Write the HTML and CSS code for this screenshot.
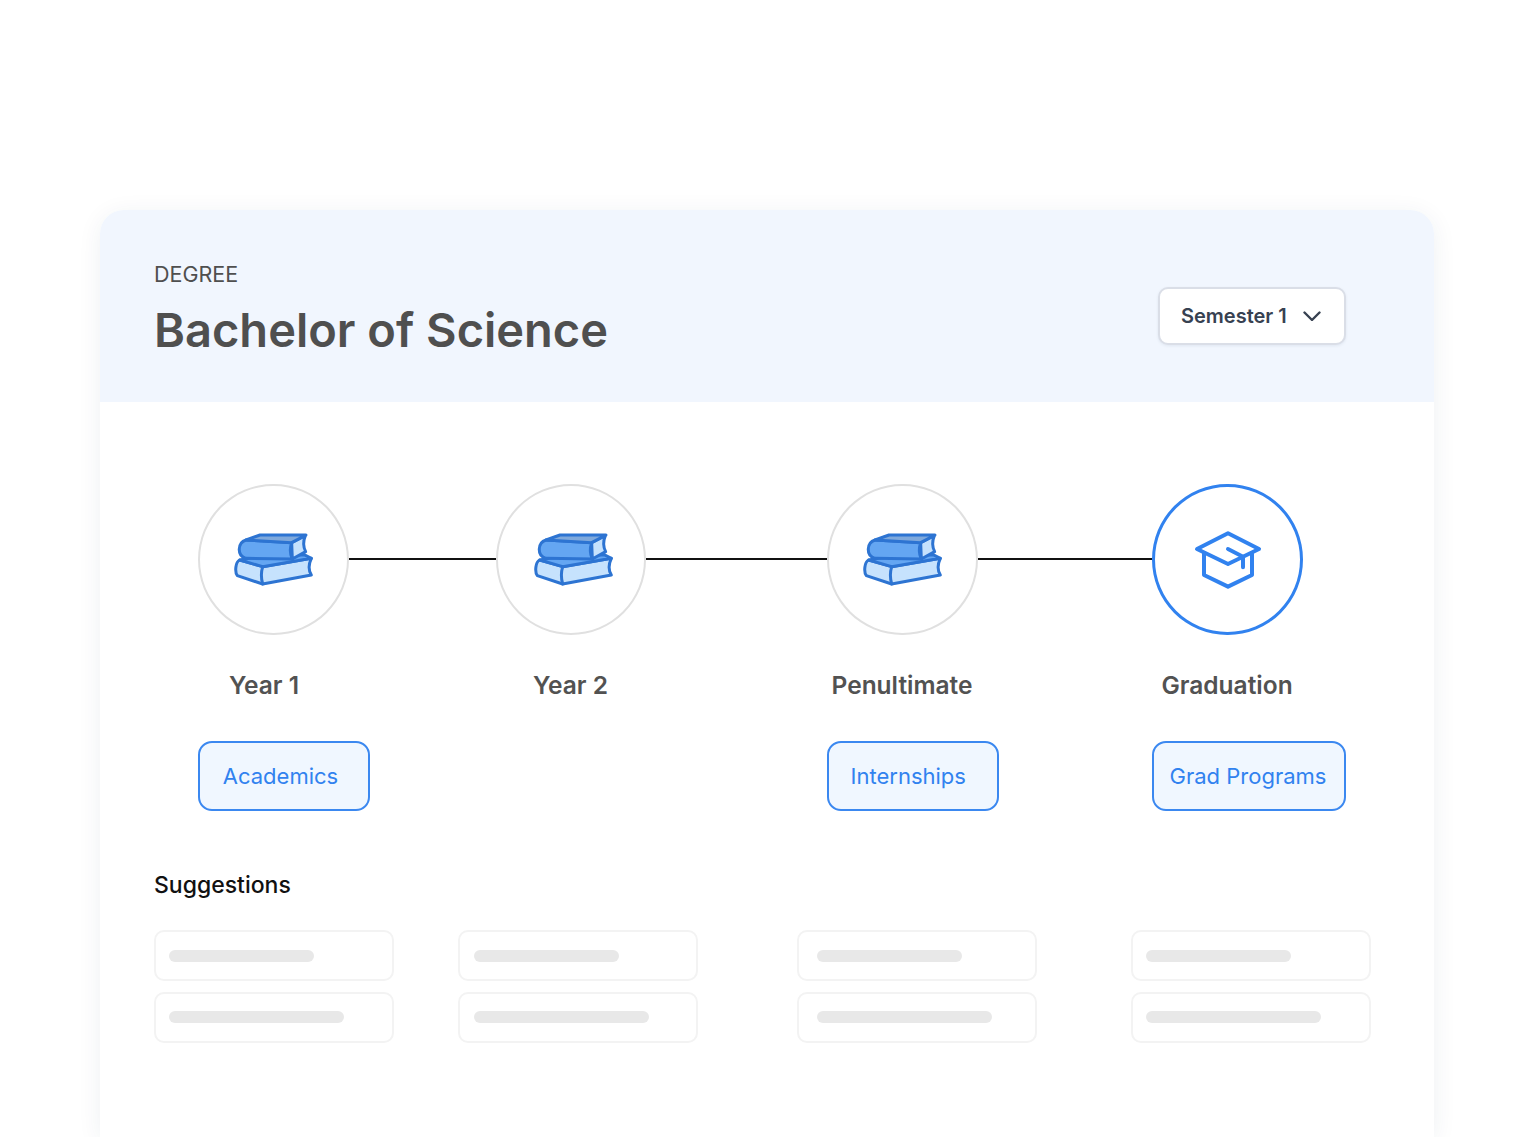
FILE: index.html
```html
<!DOCTYPE html>
<html lang="en">
<head>
    <meta charset="UTF-8">
    <meta name="viewport" content="width=device-width, initial-scale=1.0">
    <title>Degree Path</title>
    <link rel="stylesheet" href="styles.css">
</head>
<body>
    <svg class="defs" width="0" height="0" aria-hidden="true">
        <symbol id="books" viewBox="130 148 240 180">
            <g stroke="#2d74d2" stroke-width="9" stroke-linejoin="round" stroke-linecap="round">
                <path fill="#c6e2fd" d="M147 238 C134 244 132 274 140 285 L216 310 L362 283 C354 270 354 250 362 233 L216 258 Z"/>
                <path fill="#64a6f2" d="M147 238 L216 258 L362 233 L340 222 L180 232 Z"/>
                <path fill="none" d="M216 258 C211 275 211 293 216 310"/>
                <path fill="#c6e2fd" d="M303 186 L344 165 C338 180 337 198 345 213 L305 235 Z"/>
                <path fill="#64a6f2" d="M166 178 C140 186 138 226 166 233 L305 235 C298 220 298 200 303 186 Z"/>
                <path fill="#7fa9dc" d="M166 178 L208 163 L346 163 L303 186 Z"/>
            </g>
        </symbol>
    </svg>
    <main class="card">
        <header class="card-header">
            <div>
                <div class="eyebrow">DEGREE</div>
                <h1>Bachelor of Science</h1>
            </div>
            <button class="select">
                Semester 1
                <svg width="18" height="10" viewBox="0 0 18 10" fill="none" stroke="#374151" stroke-width="2.4" stroke-linecap="round" stroke-linejoin="round"><path d="M1.5 1.5 L9 9 L16.5 1.5"/></svg>
            </button>
        </header>

        <section class="timeline">
            <div class="step">
                <div class="track">
                    <div class="circle"><svg class="icon"><use href="#books"/></svg></div>
                    <div class="line"></div>
                </div>
                <div class="label label-short">Year 1</div>
                <a class="tag tag-md">Academics</a>
            </div>
            <div class="step">
                <div class="track">
                    <div class="circle"><svg class="icon icon-nudge"><use href="#books"/></svg></div>
                    <div class="line"></div>
                </div>
                <div class="label label-empty">Year 2</div>
            </div>
            <div class="step">
                <div class="track">
                    <div class="circle"><svg class="icon"><use href="#books"/></svg></div>
                    <div class="line"></div>
                </div>
                <div class="label">Penultimate</div>
                <a class="tag tag-sm">Internships</a>
            </div>
            <div class="step">
                <div class="track">
                    <div class="circle circle-active">
                        <svg class="icon" viewBox="130 148 240 180" fill="none" stroke="#3182ef" stroke-width="12" stroke-linecap="round" stroke-linejoin="round">
                            <path d="M250 158 L343 205 L250 250 L157 205 Z"/>
                            <path d="M178 218 L178 283 L250 318 L322 283 L322 218"/>
                            <path d="M250 205 L295 228 L295 260"/>
                        </svg>
                    </div>
                </div>
                <div class="label">Graduation</div>
                <a class="tag tag-lg">Grad Programs</a>
            </div>
        </section>

        <section class="suggestions">
            <h2>Suggestions</h2>
            <div class="suggestion-cols">
                <div class="col">
                    <div class="skeleton"><span class="bar"></span></div>
                    <div class="skeleton"><span class="bar bar-long"></span></div>
                </div>
                <div class="col col-b">
                    <div class="skeleton"><span class="bar"></span></div>
                    <div class="skeleton"><span class="bar bar-long"></span></div>
                </div>
                <div class="col col-c">
                    <div class="skeleton"><span class="bar"></span></div>
                    <div class="skeleton"><span class="bar bar-long"></span></div>
                </div>
                <div class="col">
                    <div class="skeleton"><span class="bar"></span></div>
                    <div class="skeleton"><span class="bar bar-long"></span></div>
                </div>
            </div>
        </section>
    </main>
</body>
</html>
```

FILE: styles.css
```css
* {
    box-sizing: border-box;
}

html, body {
    height: 1137px;
    overflow: hidden;
}

body {
    margin: 0;
    padding: 210px 99px 0 100px;
    background-color: #fff;
    font-family: Inter, "Noto Sans", sans-serif;
    color: #4f4f4f;
}

.defs {
    display: block;
    height: 0;
}

.card {
    height: 927px;
    background: #fff;
    border-radius: 24px 24px 0 0;
    box-shadow: 0 4px 24px rgba(30, 50, 90, 0.07);
}

.card-header {
    display: flex;
    justify-content: space-between;
    align-items: flex-start;
    height: 192px;
    padding: 51px 88px 0 54px;
    background: #f1f6fe;
    border-radius: 24px 24px 0 0;
}

.eyebrow {
    font-size: 21.5px;
    line-height: 27px;
    color: #4f4f4f;
}

h1 {
    margin: 13px 0 0;
    font-size: 47px;
    line-height: 58px;
    font-weight: 600;
    color: #4f4f4f;
}

.select {
    display: flex;
    align-items: center;
    justify-content: space-between;
    width: 188px;
    height: 58px;
    margin-top: 26px;
    padding: 0 23px 1px 21px;
    background: #fff;
    border: 2px solid #dadee7;
    border-radius: 10px;
    box-shadow: 0 1px 3px rgba(30, 50, 90, 0.08);
    font-family: inherit;
    font-size: 20px;
    font-weight: 600;
    color: #374151;
}

.timeline {
    display: grid;
    grid-template-columns: 297.5px 331.5px 325px 194px;
    padding: 82px 0 0 98px;
}

.track {
    display: flex;
    align-items: center;
}

.circle {
    display: flex;
    align-items: center;
    justify-content: center;
    flex: none;
    width: 150.5px;
    height: 151px;
    border: 2px solid #e0e0e0;
    border-radius: 50%;
}

.circle-active {
    border: 3px solid #3182ef;
}

.icon {
    width: 80px;
    height: 60px;
    margin-left: 2px;
}

.icon-nudge {
    margin-left: 6px;
}

.line {
    flex: 1;
    height: 2px;
    margin-top: -2px;
    background: #111;
}

.label {
    width: 150px;
    margin-top: 35px;
    margin-bottom: 41px;
    font-size: 24.5px;
    line-height: 30px;
    font-weight: 600;
    text-align: center;
    white-space: nowrap;
    color: #525252;
}

.label-short {
    padding-right: 18px;
}

.label-empty {
    margin-bottom: 111px;
}

.tag {
    display: flex;
    align-items: center;
    justify-content: center;
    height: 70px;
    padding-bottom: 1px;
    background: #f0f7ff;
    border: 2px solid #3b88f0;
    border-radius: 14px;
    font-size: 22px;
    color: #3182ef;
}

.tag-md {
    width: 172px;
    padding-right: 7px;
}

.tag-sm {
    width: 171.5px;
    padding-right: 9px;
}

.tag-lg {
    width: 194px;
    padding-right: 2px;
}

.suggestions {
    padding: 60px 0 0 54px;
}

h2 {
    margin: 0;
    font-size: 23px;
    line-height: 28px;
    font-weight: 500;
    color: #111;
}

.suggestion-cols {
    display: grid;
    grid-template-columns: 304px 339px 334px 240px;
    margin-top: 31px;
}

.col {
    display: flex;
    flex-direction: column;
    gap: 10.5px;
    width: 240px;
}

.skeleton {
    display: flex;
    align-items: center;
    height: 51px;
    padding-left: 13px;
    border: 2px solid #f3f3f3;
    border-radius: 10px;
}

.col-b .skeleton {
    padding-left: 14px;
}

.col-c .skeleton {
    padding-left: 18px;
}

.bar {
    width: 145px;
    height: 12px;
    background: #e8e8e8;
    border-radius: 6px;
}

.bar-long {
    width: 175px;
}
```
